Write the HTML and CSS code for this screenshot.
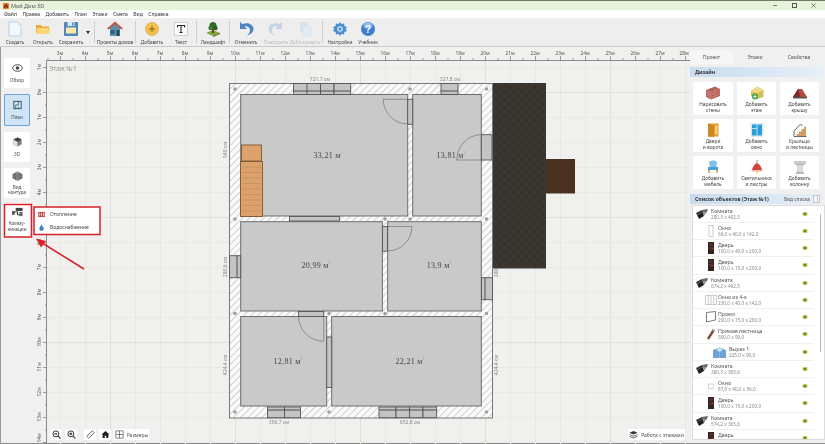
FILE: index.html
```html
<!DOCTYPE html>
<html lang="ru">
<head>
<meta charset="utf-8">
<title>Мой Дом 3D</title>
<link rel="stylesheet" href="styles.css">
</head>
<body>
<svg width="0" height="0" class="defs">
  <defs>
    <symbol id="i-room" viewBox="0 0 12 10"><path d="M0 4 6 1 7 3 1 6Z" fill="#333"/><path d="M6 1 12 0 11 3 7 3Z" fill="#666"/><path d="M1 6 7 3 8 7 3 10Z" fill="#222"/><path d="M7 3 11 3 8 7Z" fill="#999"/></symbol>
    <symbol id="i-door" viewBox="0 0 6 12"><rect width="6" height="12" fill="#2f2422"/><rect x="1" y="1" width="4" height="3" fill="#5a2c2a"/><rect x="1" y="5" width="4" height="3" fill="#5a2c2a"/><circle cx="4.6" cy="6.5" r=".6" fill="#d33"/></symbol>
    <symbol id="i-eye" viewBox="0 0 6 6"><ellipse cx="3" cy="3" rx="2.8" ry="2.2" fill="#c9d47e"/><circle cx="3" cy="3" r="1.3" fill="#5f7f1e"/></symbol>
  </defs>
</svg>
<div class="app">
  <header class="titlebar">
    <svg class="app-logo" viewBox="0 0 6 6"><rect width="6" height="6" rx="1" fill="#e8792c"/><path d="M1 5V3l2-2 2 2v2H3.6V3.6H2.4V5Z" fill="#7a2a10"/></svg>
    <span class="app-name">Мой Дом 3D</span>
    <div class="win-btns">
      <span class="win-min"></span>
      <span class="win-max"></span>
      <svg class="win-close" viewBox="0 0 6 6"><path d="M.5.5l5 5M5.5.5l-5 5" stroke="#444" stroke-width=".8"/></svg>
    </div>
  </header>
  <nav class="menubar">
    <span>Файл</span><span>Правка</span><span>Добавить</span><span>План</span><span>Этажи</span><span>Смета</span><span>Вид</span><span>Справка</span>
  </nav>
  <div class="toolbar">
    <div class="tool">
      <svg viewBox="0 0 16 16"><path d="M2 1H11L14 4V15H2Z" fill="#f3f8fe" stroke="#a9c8e8" stroke-width=".8"/><path d="M11 1V4H14Z" fill="#cfe2f5"/></svg>
      <span>Создать</span>
    </div>
    <div class="tool">
      <svg viewBox="0 0 16 16"><path d="M1 4H6L7 5.500H14V13H1Z" fill="#e8a93c"/><path d="M2 7H15.500L14 13H1Z" fill="#fbd679"/></svg>
      <span>Открыть</span>
    </div>
    <div class="tool">
      <svg viewBox="0 0 16 16"><rect x="1" y="1" width="14" height="14" rx="1" fill="#4f86bb"/><rect x="3" y="6.500" width="10" height="6" fill="#fbeaa8"/><rect x="4.500" y="1" width="7" height="4" fill="#d9e6f2"/><rect x="9" y="1.500" width="1.500" height="3" fill="#4f86bb"/></svg>
      <span>Сохранить</span>
    </div>
    <div class="caret"></div>
    <i class="sep sep-a"></i>
    <div class="tool tool-wide">
      <svg viewBox="0 0 16 16"><path d="M8 1 15.500 7.500H13V15H3V7.500H.5Z" fill="#5a93a8"/><path d="M8 .5 16 7.500 14.500 8.500 8 3 1.500 8.500 0 7.500Z" fill="#c9553d"/><rect x="3.500" y="9" width="4" height="4" fill="#2e5f78"/><rect x="9.500" y="9" width="3" height="6" fill="#234a5e"/></svg>
      <span>Проекты домов</span>
    </div>
    <i class="sep sep-e"></i>
    <div class="tool">
      <svg viewBox="0 0 16 16"><circle cx="8" cy="8" r="6.500" fill="#f3c14e" stroke="#d99a2b" stroke-width=".6"/><path d="M8 5v6M5 8h6" stroke="#8a5a10" stroke-width="1"/></svg>
      <span>Добавить</span>
    </div>
    <div class="tool tool-text">
      <svg viewBox="0 0 16 16"><rect x="1.500" y="1.500" width="13" height="13" fill="#fff" stroke="#b5b5b5" stroke-width=".6"/><path d="M4.500 4.500h7v2M8 4.500v7M6.500 11.500h3M4.500 4.500v2" fill="none" stroke="#222" stroke-width="1.100"/></svg>
      <span>Текст</span>
    </div>
    <i class="sep sep-b"></i>
    <div class="tool tool-land">
      <svg viewBox="0 0 16 16"><path d="M1 12 8 9 15 12 8 15Z" fill="#7fa83a"/><path d="M8 15 15 12 15 13 8 16Z" fill="#6a4a24"/><rect x="7" y="7" width="2" height="5" fill="#6b4423"/><circle cx="8" cy="4.500" r="3.500" fill="#2f6b2a"/><circle cx="5.500" cy="7" r="2.200" fill="#3d7f33"/><circle cx="10.500" cy="7" r="2.200" fill="#2a5f26"/></svg>
      <span>Ландшафт</span>
    </div>
    <i class="sep sep-c"></i>
    <div class="tool">
      <svg viewBox="0 0 16 16"><path d="M2 1V8H9L6.500 5.500C8.500 4.500 12 5.500 12 9 12 11 11 13 9 14.500 13 13.500 15.500 11 15.500 8 15.500 3.500 10 .5 4.500 3.200Z" fill="#4b85c5"/></svg>
      <span>Отменить</span>
    </div>
    <div class="tool tool-gap">
      <svg viewBox="0 0 16 16"><path d="M14 1V8H7L9.500 5.500C7.500 4.500 4 5.500 4 9 4 11 5 13 7 14.500 3 13.500.5 11 .5 8 .5 3.500 6 .5 11.500 3.200Z" fill="#c5d4e4"/></svg>
      <span class="off">Повторить</span>
    </div>
    <div class="tool tool-dup">
      <svg viewBox="0 0 16 16"><path d="M3 1H9L11 3V11H3Z" fill="#d5e2ef"/><path d="M6 5H12L14 7V15H6Z" fill="#e2ebf4" stroke="#d2deea" stroke-width=".5"/></svg>
      <span class="off">Дублировать</span>
    </div>
    <i class="sep sep-d"></i>
    <div class="tool">
      <svg viewBox="0 0 16 16"><path d="M8 1 9.500 3 12 2.500 12.500 5 15 6 13.800 8 15 10 12.500 11 12 13.500 9.500 13 8 15 6.500 13 4 13.500 3.500 11 1 10 2.200 8 1 6 3.500 5 4 2.500 6.500 3Z" fill="#4f8fce"/><circle cx="8" cy="8" r="2.800" fill="#cfe4f7"/><circle cx="8" cy="8" r="1.500" fill="#4f8fce"/></svg>
      <span>Настройки</span>
    </div>
    <div class="tool">
      <svg viewBox="0 0 16 16"><circle cx="8" cy="8" r="7" fill="#3f7fd1"/><ellipse cx="8" cy="4.500" rx="4.500" ry="3" fill="#8fbcec"/><text x="8" y="12" class="q">?</text></svg>
      <span>Учебник</span>
    </div>
  </div>

  <div class="main">
    <aside class="side">
      <button class="side-btn">
        <svg viewBox="0 0 12 10"><ellipse cx="6" cy="5" rx="5.300" ry="3.600" fill="none" stroke="#444" stroke-width="1"/><circle cx="6" cy="5" r="2" fill="#444"/></svg>
        <span>Обзор</span>
      </button>
      <button class="side-btn side-on">
        <svg viewBox="0 0 12 10"><rect x="2" y="1" width="8" height="8" fill="none" stroke="#2d4f55" stroke-width="1"/><path d="M7 1V5H4V9M7 7V9" fill="none" stroke="#2d4f55" stroke-width=".8"/></svg>
        <span>План</span>
      </button>
      <button class="side-btn side-3d">
        <svg viewBox="0 0 12 10"><path d="M6 0 10.500 2.300V7.500L6 10 1.500 7.500V2.300Z" fill="#7c7c7c"/><path d="M6 5 10.500 2.300 6 0 1.500 2.300Z" fill="#444"/><path d="M6 5V10L1.500 7.500V2.300Z" fill="#ddd"/></svg>
        <span>3D</span>
      </button>
      <button class="side-btn side-two">
        <svg viewBox="0 0 12 10"><path d="M1 3 6 .5 11 3V7.500L6 9.800 1 7.500Z" fill="#999" stroke="#444" stroke-width=".6"/><path d="M1 5h10M1 3.500h10M1 7h10M4 1.500v8M8 1.500v8" stroke="#444" stroke-width=".5"/></svg>
        <span>Вид<br>контура</span>
      </button>
      <button class="side-btn side-two side-com">
        <svg viewBox="0 0 12 10"><rect x="0" y="4" width="3" height="4" fill="#555"/><rect x="4" y=".5" width="7.500" height="3.500" fill="#444"/><path d="M2 5H6V8H10" fill="none" stroke="#444" stroke-width="1.300"/><rect x="8" y="5" width="3.500" height="4.500" fill="#666"/></svg>
        <span>Комму-<br>никации</span>
      </button>
      <div class="popup">
        <div class="pop-row">
          <svg viewBox="0 0 8 8"><path d="M1 1v6M3 1v6M5 1v6M7 1v6M0 2h8M0 6h8" stroke="#b5322f" stroke-width="1"/></svg>
          <span>Отопление</span>
        </div>
        <div class="pop-row">
          <svg viewBox="0 0 8 8"><path d="M4 .5C5.500 3 6.500 4 6.500 5.300 6.500 6.800 5.300 7.800 4 7.800S1.500 6.800 1.500 5.300C1.500 4 2.500 3 4 .5Z" fill="#3f7fc4"/></svg>
          <span>Водоснабжение</span>
        </div>
      </div>
    </aside>

    <section class="canvas">
      <svg class="plan" viewBox="35 47 655 397">
        <defs>
          <pattern id="grid" x="60" y="67" width="25" height="25" patternUnits="userSpaceOnUse"><path d="M.5 0V25M0 .5H25" class="g-minor"/></pattern>
          <pattern id="grid5" x="110" y="92" width="125" height="125" patternUnits="userSpaceOnUse"><path d="M.5 0V125M0 .5H125" class="g-major"/></pattern>
          <pattern id="ticks-x" x="60" y="55" width="25" height="5" patternUnits="userSpaceOnUse"><path d="M.5 1V5M13 3V5" class="tick"/></pattern>
          <pattern id="ticks-y" x="42" y="67" width="5" height="25" patternUnits="userSpaceOnUse"><path d="M1 .5H5M3 13H5" class="tick"/></pattern>
          <pattern id="hatch" width="5" height="5" patternUnits="userSpaceOnUse" patternTransform="rotate(45)"><rect width="5" height="5" fill="#fafafa"/><path d="M0 0V5" stroke="#bdbdbd" stroke-width="1.400"/></pattern>
          <pattern id="wood" width="6" height="6" patternUnits="userSpaceOnUse" patternTransform="rotate(45)"><rect width="6" height="6" fill="#3b3730"/><rect width="3" height="3" fill="#35312b"/></pattern>
        </defs>

        <rect x="46" y="60" width="644" height="384" fill="url(#grid)"/>
        <rect x="46" y="60" width="644" height="384" fill="url(#grid5)"/>

        <rect x="46" y="55" width="640" height="5" fill="url(#ticks-x)"/>
        <rect x="42" y="60" width="5" height="384" fill="url(#ticks-y)"/>
        <path d="M46.500 60V444M46 60.500H690" class="axis"/>

        <g class="ruler-x">
          <text x="60" y="55">3м</text><text x="85" y="55">4м</text><text x="110" y="55">5м</text><text x="135" y="55">6м</text><text x="160" y="55">7м</text><text x="185" y="55">8м</text><text x="210" y="55">9м</text><text x="235" y="55">10м</text><text x="260" y="55">11м</text><text x="285" y="55">12м</text><text x="310" y="55">13м</text><text x="335" y="55">14м</text><text x="360" y="55">15м</text><text x="385" y="55">16м</text><text x="410" y="55">17м</text><text x="435" y="55">18м</text><text x="460" y="55">19м</text><text x="485" y="55">20м</text><text x="510" y="55">21м</text><text x="535" y="55">22м</text><text x="560" y="55">23м</text><text x="585" y="55">24м</text><text x="610" y="55">25м</text><text x="635" y="55">26м</text><text x="660" y="55">27м</text><text x="684" y="55">28м</text>
        </g>
        <g class="ruler-y">
          <text transform="translate(41 67) rotate(-90)">1м</text><text transform="translate(41 92) rotate(-90)">0м</text><text transform="translate(41 117) rotate(-90)">1м</text><text transform="translate(41 142) rotate(-90)">2м</text><text transform="translate(41 167) rotate(-90)">3м</text><text transform="translate(41 192) rotate(-90)">4м</text><text transform="translate(41 217) rotate(-90)">5м</text><text transform="translate(41 242) rotate(-90)">6м</text><text transform="translate(41 267) rotate(-90)">7м</text><text transform="translate(41 292) rotate(-90)">8м</text><text transform="translate(41 317) rotate(-90)">9м</text><text transform="translate(41 342) rotate(-90)">10м</text><text transform="translate(41 367) rotate(-90)">11м</text><text transform="translate(41 392) rotate(-90)">12м</text><text transform="translate(41 417) rotate(-90)">13м</text><text transform="translate(41 438) rotate(-90)">14м</text>
        </g>
        <text x="49" y="71" class="floor-name">Этаж №1</text>

        <g class="dim">
          <text transform="translate(498 267) rotate(-90)">280,6 см</text>
        </g>

        <!-- roof and porch -->
        <rect x="492" y="83" width="54" height="185.500" fill="url(#wood)"/>
        <rect x="546" y="159" width="29" height="34.500" fill="#4b3120"/>

        <!-- outer walls -->
        <rect x="229.500" y="83.500" width="263" height="334.500" fill="url(#hatch)" stroke="#777" stroke-width="1"/>

        <!-- rooms -->
        <g class="room">
          <rect x="240.700" y="94.500" width="167" height="121.500"/>
          <rect x="412.700" y="94.500" width="68.600" height="121.500"/>
          <rect x="240.700" y="221.700" width="141.700" height="89.300"/>
          <rect x="387.700" y="221.700" width="93.600" height="89.300"/>
          <rect x="240.700" y="316.500" width="86" height="89.500"/>
          <rect x="331.700" y="316.500" width="149.600" height="89.500"/>
        </g>

        <!-- pillars -->
        <g class="pillar">
          <circle cx="235" cy="89" r="1.800"/><circle cx="410" cy="89" r="1.800"/><circle cx="486.500" cy="89" r="1.800"/>
          <circle cx="235" cy="219" r="1.800"/><circle cx="385" cy="219" r="1.800"/><circle cx="410" cy="219" r="1.800"/><circle cx="486.500" cy="219" r="1.800"/>
          <circle cx="235" cy="313.500" r="1.800"/><circle cx="329" cy="313.500" r="1.800"/><circle cx="385" cy="313.500" r="1.800"/><circle cx="486.500" cy="313.500" r="1.800"/>
          <circle cx="235" cy="412" r="1.800"/><circle cx="329" cy="412" r="1.800"/><circle cx="486.500" cy="412" r="1.800"/>
        </g>

        <!-- windows -->
        <g class="win">
          <rect x="293.500" y="83.500" width="14" height="11"/><rect x="307" y="83.500" width="13.500" height="11"/><rect x="320.500" y="83.500" width="13.500" height="11"/><rect x="334" y="83.500" width="16.700" height="11"/>
          <rect x="441" y="83.500" width="17" height="11"/>
          <rect x="229.500" y="255.700" width="11.200" height="22"/>
          <rect x="481.500" y="277.700" width="11" height="22"/>
          <rect x="267.500" y="407" width="17" height="10.700"/><rect x="284.500" y="407" width="16" height="10.700"/>
          <rect x="379" y="407" width="17" height="10.700"/><rect x="396" y="407" width="13.500" height="10.700"/><rect x="409.500" y="407" width="13.500" height="10.700"/><rect x="423" y="407" width="13.700" height="10.700"/>
          <rect x="289.500" y="216.500" width="50" height="4.500"/>
          <rect x="326.700" y="337" width="5" height="50.500"/>
        </g>
        <path d="M293.500 91H350.500M441 91H458M237 255.700V277.700M485 277.700V299.700M267.500 410H300.500M379 410H436.700" class="win-line"/>

        <!-- doors -->
        <g class="win">
          <rect x="407.700" y="99.300" width="5" height="25"/>
          <rect x="481.300" y="134.700" width="10.700" height="25.300"/>
          <rect x="382.500" y="226.500" width="5" height="24.700"/>
          <rect x="298.500" y="311.500" width="25.200" height="5"/>
        </g>
        <g class="swing">
          <path d="M407.500 99.300H383.300A24.500 24.500 0 0 0 407.500 124"/>
          <path d="M481.300 160H456.800A24.500 25 0 0 1 481.300 134.700"/>
          <path d="M387.700 226.500H412A24.500 24.500 0 0 1 387.700 251"/>
          <path d="M323.700 316.500V341.200A25 25 0 0 1 298.500 316.500"/>
        </g>

        <!-- stairs -->
        <g class="stairs">
          <rect x="241.500" y="145" width="20" height="16"/>
          <rect x="240.500" y="161.500" width="22" height="55"/>
          <path d="M242 167H261M242 172.500H261M242 178H261M242 183.500H261M242 189H261M242 194.500H261M242 200H261M242 205.500H261M242 211H261"/>
        </g>

        <!-- sizes -->
        <g class="dim">
          <text x="320" y="80.500">721,7 см</text>
          <text x="450" y="80.500">327,8 см</text>
          <text x="279" y="423.500">396,7 см</text>
          <text x="410" y="423.500">652,8 см</text>
          <text transform="translate(226.500 150) rotate(-90)">540 см</text>
          <text transform="translate(226.500 267) rotate(-90)">280,6 см</text>
          <text transform="translate(226.500 365) rotate(-90)">424,4 см</text>
          <text transform="translate(498 365) rotate(-90)">424,4 см</text>
        </g>

        <!-- areas -->
        <g class="area">
          <text x="328" y="158">33,21 м<tspan class="sup" dy="-4">2</tspan></text>
          <text x="451" y="158">13,81 м<tspan class="sup" dy="-4">2</tspan></text>
          <text x="316" y="268">20,99 м<tspan class="sup" dy="-4">2</tspan></text>
          <text x="439" y="268">13,9 м<tspan class="sup" dy="-4">2</tspan></text>
          <text x="288" y="364">12,81 м<tspan class="sup" dy="-4">2</tspan></text>
          <text x="410" y="364">22,21 м<tspan class="sup" dy="-4">2</tspan></text>
        </g>
      </svg>

      <div class="map-tools">
        <button class="map-btn">
          <svg viewBox="0 0 10 10"><circle cx="4.300" cy="4.300" r="3.300" fill="none" stroke="#333" stroke-width="1.100"/><path d="M2.700 4.300H5.900M6.800 6.800 9.500 9.500" stroke="#333" stroke-width="1.200"/></svg>
        </button>
        <button class="map-btn">
          <svg viewBox="0 0 10 10"><circle cx="4.300" cy="4.300" r="3.300" fill="none" stroke="#333" stroke-width="1.100"/><path d="M2.700 4.300H5.900M4.300 2.700V5.900M6.800 6.800 9.500 9.500" stroke="#333" stroke-width="1.200"/></svg>
        </button>
        <button class="map-btn map-gap">
          <svg viewBox="0 0 10 10"><path d="M7 .8 9.200 3 3 9.200.8 7Z" fill="#fff" stroke="#444" stroke-width=".8"/><path d="M5.200 2.600 6.200 3.600M3.800 4 4.800 5M2.400 5.400 3.400 6.400" stroke="#444" stroke-width=".5"/></svg>
        </button>
        <button class="map-btn">
          <svg viewBox="0 0 10 10"><path d="M5 1 9.500 5H8.200V9H5.800V6.500H4.200V9H1.800V5H.5Z" fill="#222"/></svg>
        </button>
        <button class="map-btn map-dims">
          <svg viewBox="0 0 10 10"><rect x="1" y="1" width="8" height="8" fill="none" stroke="#444" stroke-width=".7"/><path d="M5 1V9M1 5H9" stroke="#444" stroke-width=".7"/></svg>
          <span>Размеры</span>
        </button>
      </div>
      <button class="map-btn map-floors">
        <svg viewBox="0 0 10 10"><path d="M5 1 9.500 3 5 5 .5 3Z" fill="#333"/><path d="M.5 5 5 7 9.500 5M.5 7 5 9 9.500 7" fill="none" stroke="#333" stroke-width=".8"/></svg>
        <span>Работа с этажами</span>
      </button>
    </section>

    <aside class="panel">
      <div class="tabs">
        <span class="tab tab-on">Проект</span><span class="tab">Этажи</span><span class="tab">Свойства</span>
      </div>
      <h2 class="band">Дизайн</h2>
      <div class="cards">
        <div class="card">
          <svg viewBox="0 0 14 14"><path d="M0 4 9 .5 14 3V10L5 13.500 0 11Z" fill="#b5625a"/><path d="M0 4 5 6.500 14 3M5 6.500V13.500M0 6.500 5 9 14 5.500M0 9 5 11.500 14 8M9 3V11.800M2.500 5.300V10" stroke="#d9978e" stroke-width=".5" fill="none"/></svg>
          <span>Нарисовать<br>стены</span>
        </div>
        <div class="card">
          <svg viewBox="0 0 14 14"><path d="M1 5 7 .5 13.500 4V11L7 13 1 10Z" fill="#d9be58"/><path d="M7 .5 13.500 4 7 7 1 5Z" fill="#efdc8a"/><circle cx="5" cy="10.500" r="3" fill="#39a845"/><path d="M5 8.800V12.200M3.300 10.500H6.700" stroke="#fff" stroke-width=".9"/></svg>
          <span>Добавить<br>этаж</span>
        </div>
        <div class="card">
          <svg viewBox="0 0 14 14"><path d="M0 11 5 3H9L14 11Z" fill="#b04a3c"/><path d="M0 11 5 3 7.500 11Z" fill="#7a2e28"/><path d="M0 11H14V12.500H0Z" fill="#555"/></svg>
          <span>Добавить<br>крышу</span>
        </div>
        <div class="card">
          <svg viewBox="0 0 14 14"><rect x="2" y=".5" width="10.500" height="13" fill="#e59a2b"/><path d="M2 .5 8 2.500V14L2 13.500Z" fill="#c98a22"/><rect x="9" y="2.500" width="2.500" height="9" fill="#f5d27a"/></svg>
          <span>Двери<br>и ворота</span>
        </div>
        <div class="card">
          <svg viewBox="0 0 14 14"><rect x="1" y=".5" width="12" height="13" fill="#e5eef6" stroke="#c8d8e6" stroke-width=".5"/><rect x="2" y="1.500" width="10" height="11" fill="#2b9fd8"/><path d="M7 1.500V12.500M2 5.500H7" stroke="#e5eef6" stroke-width=".8"/></svg>
          <span>Добавить<br>окно</span>
        </div>
        <div class="card">
          <svg viewBox="0 0 14 14"><path d="M2 13H13V3.500H11V6H8.500V8.500H6V11H3.500V13Z" fill="#d49b68"/><path d="M1 8 7.500 1 9.500 3M1 8V13.500H13.500" fill="none" stroke="#444" stroke-width=".8"/></svg>
          <span>Крыльцо<br>и лестницы</span>
        </div>
        <div class="card">
          <svg viewBox="0 0 14 14"><path d="M3 2C5 0 10 0 11 2L10 8H4Z" fill="#7ec1e4"/><path d="M2 7H12V10H2Z" fill="#4e9fd0"/><path d="M3 10V13M11 10V13" stroke="#c9772a" stroke-width="1.200"/></svg>
          <span>Добавить<br>мебель</span>
        </div>
        <div class="card">
          <svg viewBox="0 0 14 14"><path d="M7 0V4" stroke="#777" stroke-width=".8"/><path d="M2 10C3 6 5 3.500 7 3.500S11 6 12 10Z" fill="#d6423c"/><path d="M1 10H13L12 11.500H2Z" fill="#e8b9b3"/><circle cx="7" cy="12.500" r="1.100" fill="#f4d25f"/></svg>
          <span>Светильники<br>и люстры</span>
        </div>
        <div class="card">
          <svg viewBox="0 0 14 14"><path d="M1.500 1.500H12.500V3.500C11 5 10.500 5 10 5H4C3.500 5 3 5 1.500 3.500Z" fill="#c9c9c9" stroke="#999" stroke-width=".4"/><rect x="4.500" y="5" width="5" height="7" fill="#dedede" stroke="#aaa" stroke-width=".4"/><rect x="3" y="12" width="8" height="2" fill="#bbb"/></svg>
          <span>Добавить<br>колонну</span>
        </div>
      </div>
      <h2 class="band band-list">Список объектов (Этаж №1)<span class="band-view">Вид списка</span>
        <svg class="band-ico" viewBox="0 0 7 8"><rect x=".5" y=".5" width="6" height="7" fill="#f7f7f7" stroke="#aaa" stroke-width=".6"/><path d="M4.500.5V7.500" stroke="#aaa" stroke-width=".6"/></svg>
      </h2>
      <div class="list">
        <div class="row">
          <svg class="ri ri-room"><use href="#i-room"/></svg>
          <div class="rt"><b>Комната</b><small>280,3 x 492,5</small></div>
          <svg class="re"><use href="#i-eye"/></svg>
        </div>
        <div class="row row-sub">
          <svg class="ri" viewBox="0 0 6 12"><rect x="1" y=".5" width="4" height="11" fill="#fff" stroke="#aaa" stroke-width=".6"/></svg>
          <div class="rt"><b>Окно</b><small>66,0 x 40,0 x 142,0</small></div>
          <svg class="re"><use href="#i-eye"/></svg>
        </div>
        <div class="row row-sub">
          <svg class="ri"><use href="#i-door"/></svg>
          <div class="rt"><b>Дверь</b><small>100,0 x 40,0 x 200,0</small></div>
          <svg class="re"><use href="#i-eye"/></svg>
        </div>
        <div class="row row-sub">
          <svg class="ri"><use href="#i-door"/></svg>
          <div class="rt"><b>Дверь</b><small>100,0 x 15,0 x 200,0</small></div>
          <svg class="re"><use href="#i-eye"/></svg>
        </div>
        <div class="row">
          <svg class="ri ri-room"><use href="#i-room"/></svg>
          <div class="rt"><b>Комната</b><small>674,2 x 492,5</small></div>
          <svg class="re"><use href="#i-eye"/></svg>
        </div>
        <div class="row row-sub">
          <svg class="ri ri-wide" viewBox="0 0 12 12"><path d="M.5 1.500H11.500V10.500H.5ZM3.300 1.500V10.500M6 1.500V10.500M8.700 1.500V10.500" fill="#fff" stroke="#aaa" stroke-width=".6"/></svg>
          <div class="rt"><b>Окно из 4-х</b><small>230,0 x 40,0 x 142,0</small></div>
          <svg class="re"><use href="#i-eye"/></svg>
        </div>
        <div class="row row-sub">
          <svg class="ri ri-wide" viewBox="0 0 12 12"><path d="M1.500 1.500 10.500.5V9L1.500 11Z" fill="#fff" stroke="#444" stroke-width=".7"/></svg>
          <div class="rt"><b>Проем</b><small>200,0 x 15,0 x 200,0</small></div>
          <svg class="re"><use href="#i-eye"/></svg>
        </div>
        <div class="row row-sub">
          <svg class="ri ri-wide" viewBox="0 0 12 12"><path d="M3 11 9 1.500" stroke="#7c5035" stroke-width="2.400"/><path d="M8 2.500 9.500 1" stroke="#ccc" stroke-width="2"/></svg>
          <div class="rt"><b>Прямая лестница</b><small>300,0 x 90,0</small></div>
          <svg class="re"><use href="#i-eye"/></svg>
        </div>
        <div class="row row-deep">
          <svg class="ri ri-cut" viewBox="0 0 13 12"><path d="M0 4 6.500 1.500 13 4V12H0Z" fill="#6fa3d8"/><path d="M3 3.500 6.500 2 10 3.500 6.500 6Z" fill="#d9e6f2"/><path d="M6.500 6V12" stroke="#a9c6e6" stroke-width=".5"/></svg>
          <div class="rt"><b>Вырез 1</b><small>225,0 x 90,0</small></div>
          <svg class="re"><use href="#i-eye"/></svg>
        </div>
        <div class="row">
          <svg class="ri ri-room"><use href="#i-room"/></svg>
          <div class="rt"><b>Комната</b><small>380,3 x 365,6</small></div>
          <svg class="re"><use href="#i-eye"/></svg>
        </div>
        <div class="row row-sub">
          <svg class="ri" viewBox="0 0 6 12"><rect x=".5" y="4" width="5" height="4.500" fill="#fff" stroke="#aaa" stroke-width=".5"/></svg>
          <div class="rt"><b>Окно</b><small>87,0 x 40,0 x 56,0</small></div>
          <svg class="re"><use href="#i-eye"/></svg>
        </div>
        <div class="row row-sub">
          <svg class="ri"><use href="#i-door"/></svg>
          <div class="rt"><b>Дверь</b><small>100,0 x 15,0 x 200,0</small></div>
          <svg class="re"><use href="#i-eye"/></svg>
        </div>
        <div class="row">
          <svg class="ri ri-room"><use href="#i-room"/></svg>
          <div class="rt"><b>Комната</b><small>574,2 x 365,6</small></div>
          <svg class="re"><use href="#i-eye"/></svg>
        </div>
        <div class="row row-sub">
          <svg class="ri"><use href="#i-door"/></svg>
          <div class="rt"><b>Дверь</b><small>100,0 x 15,0 x 200,0</small></div>
          <svg class="re"><use href="#i-eye"/></svg>
        </div>
        <span class="scroll"></span>
      </div>
    </aside>
  </div>

  <svg class="marks" viewBox="0 0 825 444">
    <rect x="4.500" y="204.500" width="27" height="32.500"/>
    <rect x="34" y="207" width="66" height="27.500"/>
    <path d="M84 269 39 241"/>
    <path class="marks-head" d="M36 238.500 46 241 41 247.500Z"/>
  </svg>
</div>
</body>
</html>
```
FILE: styles.css
```css
* { box-sizing: border-box; }
html, body { margin: 0; padding: 0; width: 825px; height: 444px; overflow: hidden; }
body { font-family: "Noto Sans", "Liberation Sans", sans-serif; color: #444; background: #f0f0f0; }
button { font: inherit; color: inherit; padding: 0; margin: 0; border: 0; }
.defs { position: absolute; }

.app { position: relative; width: 825px; height: 444px; display: flex; flex-direction: column; overflow: hidden; filter: blur(.35px); }

.titlebar { height: 10px; flex: none; display: flex; align-items: center; background: #e8f3dc; border-top: 1px solid #6f7f66; padding-left: 3px; }
.app-logo { width: 6px; height: 6px; margin-right: 2px; }
.app-name { font-size: 5.5px; color: #555; }
.win-btns { margin-left: auto; display: flex; align-items: center; gap: 14.500px; padding-right: 9px; }
.win-min { width: 4px; height: 1px; background: #777; }
.win-max { width: 5px; height: 5px; border: 1px solid #555; background: #e8f3dc; }
.win-close { width: 5px; height: 5px; }

.menubar { height: 8px; flex: none; display: flex; align-items: center; gap: 5.500px; background: #fff; padding-left: 4px; font-size: 5px; color: #333; }

.toolbar { height: 29px; flex: none; display: flex; align-items: stretch; padding-left: 1px; background: #eeeeee; border-bottom: 1px solid #c9c9c9; }
.tool { width: 28px; display: flex; flex-direction: column; align-items: center; padding-top: 3px; font-size: 4.800px; color: #444; white-space: nowrap; }
.tool svg { width: 16px; height: 16px; flex: none; margin-bottom: 1.500px; }
.tool .off { color: #bdbdbd; }
.tool-wide { width: 38px; }
.tool-land { width: 32px; }
.tool-text { margin-left: 1px; }
.tool-gap { margin-left: 2px; }
.tool-dup { width: 30px; }
.q { font-family: "Liberation Sans", sans-serif; font-size: 10px; font-weight: 700; fill: #fff; text-anchor: middle; }
.caret { width: 8px; position: relative; }
.caret::after { content: ""; position: absolute; left: 1px; top: 13px; border: 2px solid transparent; border-top: 3px solid #222; border-bottom: 0; }
.sep { width: 1px; margin: 3px 1px; background: #cfcfcf; flex: none; }
.sep-e { margin: 3px 2px 3px 1px; }
.sep-b { margin: 3px 0 3px 1px; }
.sep-c { margin: 3px 2px 3px 0; }
.sep-d { margin: 3px 3px 3px 2px; }

.main { flex: 1; min-height: 0; display: flex; background: #f0f0ee; border-bottom: 1px solid #8a8a8a; }

.side { width: 35px; flex: none; position: relative; display: flex; flex-direction: column; gap: 6px; padding: 11px 0 0 4px; background: #f0f0f0; border-left: 1px solid #9a9a9a; z-index: 2; }
.side-btn { width: 26px; height: 30px; flex: none; margin-left: -1px; display: flex; flex-direction: column; align-items: center; justify-content: center; gap: 5px; background: #fff; font-size: 4.600px; line-height: 5.500px; color: #444; border-radius: 1px; }
.side-btn svg { width: 11px; height: 10px; flex: none; }
.side-on { height: 32px; background: #cfe4f7; border: 1px solid #6ba3d9; }
.side-two { gap: 4px; }
.side-com { height: 33px; margin-top: -1px; }
.popup { position: absolute; left: 34px; top: 160px; width: 66px; height: 27px; padding: 3px 3px; display: flex; flex-direction: column; justify-content: center; gap: 6px; background: #fff; font-size: 5px; color: #444; }
.pop-row { display: flex; align-items: center; gap: 5px; height: 7px; }
.pop-row svg { width: 7px; height: 7px; flex: none; }

.canvas { flex: 1; min-width: 0; position: relative; background: #f0f0ee; }
.plan { display: block; width: 655px; height: 397px; }
.g-minor { stroke: #e9e9e2; stroke-width: 1; fill: none; }
.g-major { stroke: #e0e0d6; stroke-width: 1; fill: none; }
.tick { stroke: #777; stroke-width: .7; fill: none; }
.axis { stroke: #8a8a8a; stroke-width: 1; fill: none; }
.ruler-x text, .ruler-y text { font-size: 4.800px; fill: #555; text-anchor: middle; }
.floor-name { font-size: 6.500px; fill: #999; }
.room rect { fill: #c9c9c9; stroke: #6e6e6e; stroke-width: 1; }
.pillar circle { fill: #a0a0a0; }
.win rect { fill: #c4c4c4; stroke: #555; stroke-width: .9; }
.win-line { stroke: #444; stroke-width: .9; fill: none; }
.swing path { fill: none; stroke: #666; stroke-width: .6; }
.stairs rect { fill: #dda26c; stroke: #7d5533; stroke-width: .9; }
.stairs path { stroke: #bb8350; stroke-width: .5; fill: none; }
.dim text { font-size: 5px; fill: #888; text-anchor: middle; }
.area text { font-family: "Liberation Serif", serif; font-size: 8px; fill: #444; text-anchor: middle; letter-spacing: .3px; }
.area .sup { font-size: 3px; fill: #888; }

.map-tools { position: absolute; left: 15px; bottom: 3px; display: flex; gap: 3px; }
.map-btn { height: 11px; width: 12px; display: flex; align-items: center; justify-content: center; gap: 3px; background: #fff; font-size: 5px; color: #555; border-radius: 1px; }
.map-btn svg { width: 9px; height: 9px; flex: none; }
.map-gap { margin-left: 4px; }
.map-dims { width: 35px; }
.map-floors { position: absolute; right: 5px; bottom: 3px; width: 57px; white-space: nowrap; }

.panel { width: 135px; flex: none; display: flex; flex-direction: column; background: #f0f0f0; padding: 3px 0 0 0; min-height: 0; }
.tabs { display: flex; height: 14px; flex: none; font-size: 5px; color: #555; }
.tab { width: 44px; display: flex; align-items: center; justify-content: center; }
.tab-on { width: 43px; background: #f6f6f6; border-radius: 2px 2px 0 0; }
.band { height: 10px; flex: none; margin: 3px 2px 0 0; padding-left: 5px; display: flex; align-items: center; font-size: 5.200px; font-weight: 700; color: #333; background: linear-gradient(90deg, #c9dcef, #e6eff8); }
.band-list { margin-top: 5px; }
.band-view { margin-left: auto; margin-right: 3px; font-size: 4.800px; font-weight: 400; color: #555; }
.band-ico { width: 7px; height: 8px; margin-right: 3px; flex: none; }
.cards { flex: none; display: grid; grid-template-columns: 40px 39px 39px; grid-auto-rows: 32.500px; gap: 4.500px 4px; padding: 5px 0 0 3px; }
.card { background: #fff; display: flex; flex-direction: column; align-items: center; padding-top: 3.500px; font-size: 4.800px; line-height: 5.500px; text-align: center; color: #444; border-radius: 1px; }
.card svg { width: 14px; height: 14px; flex: none; margin-bottom: 2.500px; }

.list { position: relative; flex: 1; min-height: 0; margin: 1px 0 3px 2px; overflow: hidden; background: #fff; border: 1px solid #dcdcdc; }
.row { height: 17.250px; display: flex; align-items: center; padding-left: 2px; border-bottom: 1px solid #f0f0f0; width: 121px; }
.ri { width: 6px; height: 12px; flex: none; margin-left: 13px; margin-right: 4px; }
.ri-room { width: 12px; height: 10px; margin-left: 1px; margin-right: 3px; }
.ri-wide { width: 12px; margin-left: 10px; margin-right: 1px; }
.ri-cut { width: 13px; margin-left: 18px; margin-right: 3px; }
.rt { flex: 1; min-width: 0; display: flex; flex-direction: column; line-height: 6px; white-space: nowrap; }
.rt b { font-weight: 400; font-size: 5.200px; color: #555; }
.rt small { font-size: 4.700px; color: #888; }
.re { width: 6px; height: 6px; flex: none; margin-right: 6px; }
.scroll { position: absolute; right: 3px; top: 8px; width: 1px; height: 138px; background: #bbb; }

.marks { position: absolute; left: 0; top: 0; width: 825px; height: 444px; fill: none; stroke: #d9202a; stroke-width: 1.500; z-index: 5; pointer-events: none; }
.marks-head { fill: #d9202a; stroke: none; }
```
